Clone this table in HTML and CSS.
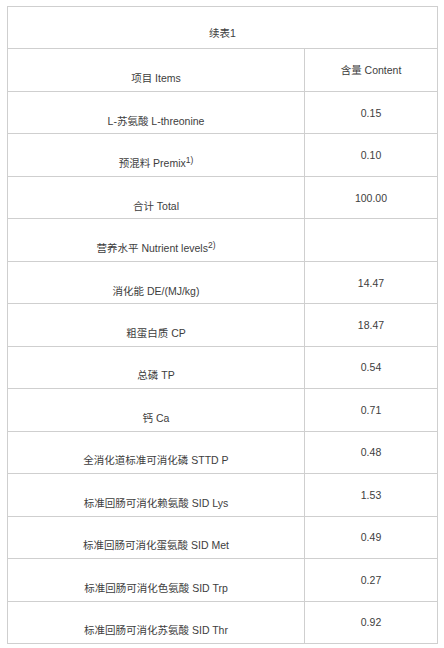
FILE: index.html
```html
<!DOCTYPE html>
<html lang="zh">
<head>
<meta charset="utf-8">
<link rel="stylesheet" href="styles.css">
</head>
<body>
<table class="data">
  <colgroup><col class="c-item"><col class="c-val"></colgroup>
  <tr><td class="title" colspan="2">续表1</td></tr>
  <tr><td class="item">项目 Items</td><td class="val">含量 Content</td></tr>
  <tr><td class="item">L-苏氨酸 L-threonine</td><td class="val">0.15</td></tr>
  <tr><td class="item">预混料 Premix<sup>1)</sup></td><td class="val">0.10</td></tr>
  <tr><td class="item">合计 Total</td><td class="val">100.00</td></tr>
  <tr><td class="item">营养水平 Nutrient levels<sup>2)</sup></td><td class="val"></td></tr>
  <tr><td class="item">消化能 DE/(MJ/kg)</td><td class="val">14.47</td></tr>
  <tr><td class="item">粗蛋白质 CP</td><td class="val">18.47</td></tr>
  <tr><td class="item">总磷 TP</td><td class="val">0.54</td></tr>
  <tr><td class="item">钙 Ca</td><td class="val">0.71</td></tr>
  <tr><td class="item">全消化道标准可消化磷 STTD P</td><td class="val">0.48</td></tr>
  <tr><td class="item">标准回肠可消化赖氨酸 SID Lys</td><td class="val">1.53</td></tr>
  <tr><td class="item">标准回肠可消化蛋氨酸 SID Met</td><td class="val">0.49</td></tr>
  <tr><td class="item">标准回肠可消化色氨酸 SID Trp</td><td class="val">0.27</td></tr>
  <tr><td class="item">标准回肠可消化苏氨酸 SID Thr</td><td class="val">0.92</td></tr>
</table>
</body>
</html>
```
FILE: styles.css
```css
html, body {
  margin: 0;
  background: #fff;
}
body {
  padding: 6px 7px;
  font-family: "Liberation Sans", Arial, "Noto Sans CJK SC", sans-serif;
  font-size: 10.5px;
  color: #3d3d3d;
}
.data {
  border-collapse: collapse;
  width: 430px;
  table-layout: fixed;
}
.c-item { width: 297px; }
.c-val { width: 133px; }
.data tr { height: 42.47px; }
.data td {
  border: 1px solid #cfcfcf;
  text-align: center;
  line-height: 16px;
  padding: 0 4px;
  box-sizing: border-box;
}
.item {
  vertical-align: middle;
  padding-top: 16px !important;
}
.title {
  vertical-align: middle;
  padding-top: 11px !important;
}
.val {
  vertical-align: middle;
}
sup {
  font-size: 8.5px;
  line-height: 0;
  vertical-align: 4px;
}
```
